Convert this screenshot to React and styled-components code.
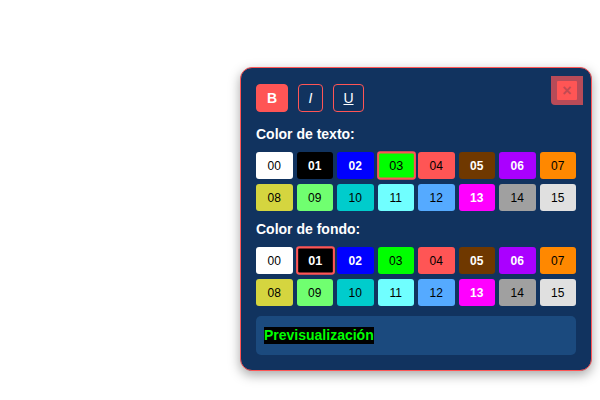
import React, { useState } from "react";
import styled, { createGlobalStyle } from "styled-components";

const GlobalStyle = createGlobalStyle`
  body {
    margin: 0;
    background: #ffffff;
    font-family: "Liberation Sans", Arial, sans-serif;
  }
`;

const Page = styled.div`
  width: 600px;
  height: 400px;
  display: flex;
  justify-content: flex-end;
  align-items: flex-start;
  padding: 67px 8px 0 0;
  box-sizing: border-box;
`;

const Panel = styled.div`
  position: relative;
  width: 352px;
  box-sizing: border-box;
  padding: 16px 15px 15px 15px;
  background: #11335f;
  border: 1px solid #ff5555;
  border-radius: 12px;
  box-shadow: 0 4px 12px rgba(0, 0, 0, 0.35);
  color: #ffffff;
`;

const CloseButton = styled.button`
  position: absolute;
  top: 8px;
  right: 8px;
  width: 32px;
  height: 29px;
  padding: 5px 6px;
  border: none;
  border-radius: 0 0 0 4px;
  background: rgba(255, 85, 85, 0.7);
  display: flex;
  cursor: pointer;
`;

const CloseInner = styled.span`
  flex: 1;
  background: #ff5555;
  border-radius: 1px;
  color: #c24a52;
  font-size: 16px;
  font-weight: 700;
  line-height: 19px;
  text-align: center;
`;

const Toolbar = styled.div`
  display: flex;
  gap: 10px;
  margin-bottom: 12px;
`;

const StyleButton = styled.button`
  height: 28px;
  min-width: ${(p) => p.$w}px;
  padding: 0;
  border-radius: 4px;
  border: 1px solid #ff5555;
  background: ${(p) => (p.$active ? "#ff5555" : "transparent")};
  color: #ffffff;
  font-family: "Liberation Sans", Arial, sans-serif;
  font-size: 14px;
  font-weight: ${(p) => (p.$bold ? 700 : 400)};
  font-style: ${(p) => (p.$italic ? "italic" : "normal")};
  text-decoration: ${(p) => (p.$underline ? "underline" : "none")};
  cursor: pointer;
`;

const Label = styled.div`
  font-size: 14px;
  font-weight: 700;
  line-height: 20px;
  margin-bottom: 8px;
`;

const Grid = styled.div`
  display: grid;
  grid-template-columns: repeat(8, 1fr);
  column-gap: 4px;
  row-gap: 5px;
  margin-bottom: 8px;
`;

const Swatch = styled.button`
  height: 27px;
  padding: 0;
  border-radius: 3px;
  border: ${(p) => (p.$selected ? "2px solid #ff5555" : "none")};
  transform: ${(p) => (p.$selected ? "scale(1.05)" : "none")};
  background: ${(p) => p.$bg};
  color: ${(p) => (p.$light ? "#ffffff" : "#000000")};
  font-family: "Liberation Sans", Arial, sans-serif;
  font-size: 12px;
  font-weight: ${(p) => (p.$light ? 700 : 400)};
  cursor: pointer;
`;

const Preview = styled.div`
  margin-top: 10px;
  height: 39px;
  box-sizing: border-box;
  padding: 0 8px;
  display: flex;
  align-items: center;
  background: #1b4a7e;
  border-radius: 5px;
`;

const PreviewText = styled.span`
  background: ${(p) => p.$bg};
  color: ${(p) => p.$fg};
  font-size: 14px;
  font-weight: 700;
  line-height: 17px;
`;

const COLORS = [
  { bg: "#ffffff" },
  { bg: "#000000", light: true },
  { bg: "#0000ff", light: true },
  { bg: "#00ff00" },
  { bg: "#ff5555" },
  { bg: "#6f3800", light: true },
  { bg: "#aa00ff", light: true },
  { bg: "#ff8800" },
  { bg: "#d5d53f" },
  { bg: "#70ff70" },
  { bg: "#00cccc" },
  { bg: "#70ffff" },
  { bg: "#55aaff" },
  { bg: "#ff00ff", light: true },
  { bg: "#a0a0a0" },
  { bg: "#e0e0e0" },
];

const Palette = ({ selected, onPick }) => (
  <Grid>
    {COLORS.map((c, i) => (
      <Swatch
        key={i}
        $bg={c.bg}
        $light={c.light}
        $selected={selected === i}
        onClick={() => onPick(i)}
      >
        {String(i).padStart(2, "0")}
      </Swatch>
    ))}
  </Grid>
);

export default function App() {
  const [fg, setFg] = useState(3);
  const [bg, setBg] = useState(1);

  return (
    <>
      <GlobalStyle />
      <Page>
        <Panel>
          <CloseButton>
            <CloseInner>×</CloseInner>
          </CloseButton>
          <Toolbar>
            <StyleButton $w={32} $active $bold>B</StyleButton>
            <StyleButton $w={25} $italic>I</StyleButton>
            <StyleButton $w={31} $underline>U</StyleButton>
          </Toolbar>
          <Label>Color de texto:</Label>
          <Palette selected={fg} onPick={setFg} />
          <Label>Color de fondo:</Label>
          <Palette selected={bg} onPick={setBg} />
          <Preview>
            <PreviewText $fg={COLORS[fg].bg} $bg={COLORS[bg].bg}>
              Previsualización
            </PreviewText>
          </Preview>
        </Panel>
      </Page>
    </>
  );
}
